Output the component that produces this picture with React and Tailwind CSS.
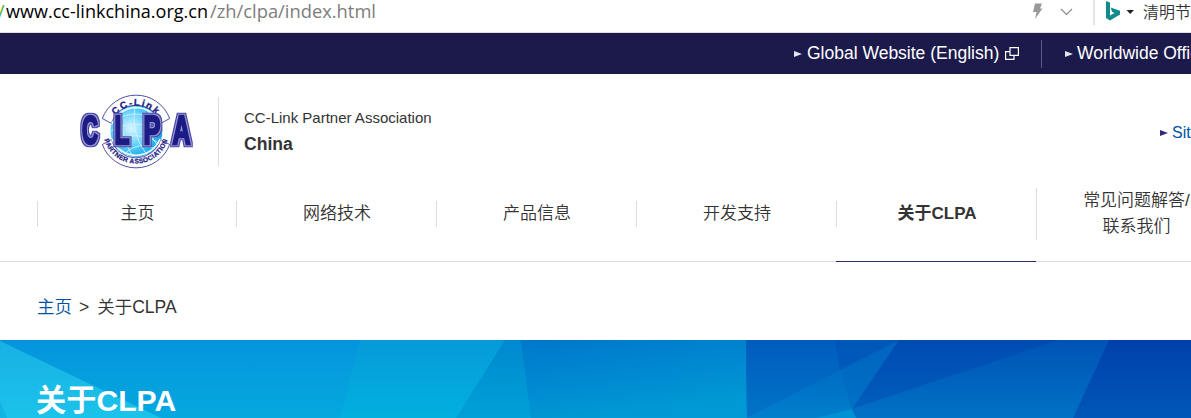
const nav = [
  { label: "主页" },
  { label: "网络技术" },
  { label: "产品信息" },
  { label: "开发支持" },
  { label: "关于CLPA", active: true },
];

function Arrow({ fill, className }) {
  return (
    <svg width="8" height="6" viewBox="0 0 8 6" className={className}>
      <path d="M0 0L8 3L0 6Z" fill={fill} />
    </svg>
  );
}

function Logo() {
  return (
    <svg width="118" height="80" viewBox="78 90 118 80" className="shrink-0">
      <defs>
        <radialGradient id="globe" cx="0.4" cy="0.45" r="0.62">
          <stop offset="0" stopColor="#d9f5ff" />
          <stop offset="0.55" stopColor="#5fd0fa" />
          <stop offset="1" stopColor="#0a9fe8" />
        </radialGradient>
        <filter id="outline" x="-10%" y="-20%" width="120%" height="140%" colorInterpolationFilters="sRGB">
          <feMorphology in="SourceAlpha" operator="dilate" radius="2" result="wide" />
          <feFlood floodColor="#4a48a6" />
          <feComposite in2="wide" operator="in" result="outer" />
          <feMorphology in="SourceAlpha" operator="dilate" radius="1" result="narrow" />
          <feFlood floodColor="#9a98d4" />
          <feComposite in2="narrow" operator="in" result="inner" />
          <feMerge>
            <feMergeNode in="outer" />
            <feMergeNode in="inner" />
            <feMergeNode in="SourceGraphic" />
          </feMerge>
        </filter>
        <path id="arcTop" d="M109.200 132.500A26.800 26.800 0 0 1 162.800 132.500" />
        <path id="arcBottom" d="M103 130.500A33 33 0 0 0 169 130.500" />
      </defs>
      <circle cx="136.500" cy="131" r="26" fill="url(#globe)" />
      <g fill="none" stroke="#d5f4ff" strokeWidth="0.8">
        <path d="M113 121Q137 106 160 123M111 131Q137 116 163 133M113 143Q138 128 160 144M122 110Q119 135 133 157M135 106Q130 133 147 155M149 109Q144 130 158 146M124 154Q139 140 156 149" />
      </g>
      <g fill="#fff" stroke="#3c3a9c" strokeWidth="0.9">
        <path d="M102.300 118.500A36 36 0 0 1 169.700 118.500L160.500 123.500A25.500 25.500 0 0 0 111.500 123.500Z" />
        <path d="M102.300 144.500A36 36 0 0 0 169.700 144.500L160.500 139.500A25.500 25.500 0 0 1 111.500 139.500Z" />
      </g>
      <path d="M112 124A25.800 25.800 0 0 1 160 124M112 139A25.800 25.800 0 0 0 160 139" fill="none" stroke="#e8f9ff" strokeWidth="1.8" />
      <g fill="#1d1b84" fontFamily="Liberation Sans Narrow, Liberation Sans, Arial, sans-serif" fontWeight="700">
        <text fontSize="9.500" letterSpacing="1.500" textAnchor="middle" stroke="#1d1b84" strokeWidth="0.3"><textPath href="#arcTop" startOffset="50%">CC-Link</textPath></text>
        <text fontSize="6.600" letterSpacing="0.35" textAnchor="middle" stroke="#1d1b84" strokeWidth="0.25"><textPath href="#arcBottom" startOffset="50%">PARTNER ASSOCIATION</textPath></text>
        <g fontSize="40" stroke="#1d1b84" strokeWidth="2.600" filter="url(#outline)">
          <text x="82" y="144.200" textLength="16" lengthAdjust="spacingAndGlyphs">C</text>
          <text x="114.500" y="144.200" textLength="15" lengthAdjust="spacingAndGlyphs">L</text>
          <text x="143.500" y="144.200" textLength="17" lengthAdjust="spacingAndGlyphs">P</text>
          <text x="172.500" y="144.200" textLength="18" lengthAdjust="spacingAndGlyphs">A</text>
        </g>
      </g>
    </svg>
  );
}

function BannerArt() {
  return (
    <svg width="1191" height="78" viewBox="0 340 1191 78" preserveAspectRatio="none" className="col-start-1 row-start-1">
      <defs>
        <linearGradient id="g1" x2="0" y2="1"><stop stopColor="#0594dc" /><stop offset="1" stopColor="#04a9df" /></linearGradient>
        <linearGradient id="g2" x2="0" y2="1"><stop stopColor="#18b1e4" /><stop offset="1" stopColor="#1bc3ea" /></linearGradient>
        <linearGradient id="g3" x2="0" y2="1"><stop stopColor="#069ad9" /><stop offset="1" stopColor="#02b0df" /></linearGradient>
        <linearGradient id="g4" x2="0" y2="1"><stop stopColor="#0088cf" /><stop offset="1" stopColor="#00a1d8" /></linearGradient>
        <linearGradient id="g5" x2="0.35" y2="1"><stop stopColor="#0077cb" /><stop offset="1" stopColor="#0099d5" /></linearGradient>
        <linearGradient id="g6" x2="0" y2="1"><stop stopColor="#005cbe" /><stop offset="1" stopColor="#0074c6" /></linearGradient>
        <linearGradient id="g7" x2="0" y2="1"><stop stopColor="#0061c0" /><stop offset="1" stopColor="#007fcb" /></linearGradient>
        <linearGradient id="g8" x2="0" y2="1"><stop stopColor="#004bb2" /><stop offset="1" stopColor="#005dbb" /></linearGradient>
        <linearGradient id="g9" x2="0" y2="1"><stop stopColor="#0053b5" /><stop offset="1" stopColor="#0071c4" /></linearGradient>
        <linearGradient id="g10" x2="0" y2="1"><stop stopColor="#0040ac" /><stop offset="1" stopColor="#0057b7" /></linearGradient>
      </defs>
      <path d="M0 340H361L341 418H0Z" fill="url(#g1)" />
      <path d="M0 341L161 418H0Z" fill="url(#g2)" />
      <path d="M0 401L7 418H0Z" fill="#12b4e3" />
      <path d="M360 340H506L457 418H340Z" fill="url(#g3)" />
      <path d="M505 340H523L533 418H456Z" fill="url(#g4)" />
      <path d="M521 340H748V418H531Z" fill="url(#g5)" />
      <path d="M746 340H1115V418H747Z" fill="url(#g9)" />
      <path d="M746 340H899V418H747Z" fill="url(#g6)" />
      <path d="M899 340L852 409L856 418H747Z" fill="url(#g7)" />
      <path d="M835 340H899L840 369.800Z" fill="#0053b5" fillOpacity="0.6" />
      <path d="M899 340L852 409L840.500 370Z" fill="#0066bf" fillOpacity="0.5" />
      <path d="M899 340H1060L852 409Z" fill="url(#g8)" />
      <path d="M1058 340H1112L1076 418H856L852 409Z" fill="url(#g9)" />
      <path d="M852 409L816 418H856Z" fill="#0090d4" />
      <path d="M1109 340H1191V418H1073Z" fill="url(#g10)" />
    </svg>
  );
}

export default function App() {
  return (
    <div className="flex h-[418px] w-[1191px] flex-col overflow-hidden bg-white font-['Liberation_Sans','Noto_Sans_CJK_SC',sans-serif] text-[17px] text-[#333]">
      <div className="flex h-[33px] shrink-0 items-start justify-between border-b border-[#dfdfdf]">
        <div className="whitespace-pre pt-px font-['Open_Sans','Noto_Sans',sans-serif] text-[18px] leading-[23px] text-black">
          <svg width="376" height="27" className="block overflow-visible">
            <text x="-2" y="17" fill="#4caf22">/</text>
            <text x="6" y="17" textLength="202" lengthAdjust="spacingAndGlyphs">www.cc-linkchina.org.cn</text>
            <text x="210" y="17" textLength="166" lengthAdjust="spacingAndGlyphs" fill="#7d7d7d">/zh/clpa/index.html</text>
          </svg>
        </div>
        <div className="flex h-[25px] w-[159px] shrink-0 items-center">
          <svg width="110" height="25" viewBox="1032 0 110 25" className="shrink-0">
            <path d="M1035 3.500H1042L1040 8.500H1042.500L1035 19L1036.500 12H1033Z" fill="#999" />
            <path d="M1061 9L1066.500 14.500L1072 9" fill="none" stroke="#888" strokeWidth="1.1" />
            <path d="M1094 0V25" stroke="#e4e4e4" strokeWidth="2" />
            <path d="M1106 1L1110 2.500V15.500L1114.500 13L1112 11.800L1110.700 7.500L1120 10.700V14.500L1110 20.500L1106 18Z" fill="#118b8b" />
            <path d="M1126.500 10H1134L1130.200 14Z" fill="#222" />
          </svg>
          <span className="w-[49px] shrink-0 overflow-hidden whitespace-nowrap pl-px text-[16px] leading-6 font-[350]">清明节</span>
        </div>
      </div>

      <div className="flex h-[41px] shrink-0 items-center whitespace-nowrap bg-[#1b1a4b] pl-[794px] text-[17.5px] text-white">
        <Arrow fill="#e6e6ee" className="shrink-0" />
        <span className="ml-[5px] w-[193px] shrink-0">Global Website (English)</span>
        <svg width="14" height="13" viewBox="0 0 14 13" className="ml-[5px] shrink-0" fill="none" stroke="#fff" strokeWidth="1.2">
          <path d="M5 0.600H13.400V8.400H5ZM5 4.600H0.600V12.400H9V8.400" />
        </svg>
        <div className="ml-[22px] h-7 w-px shrink-0 bg-[#5b5a82]" />
        <Arrow fill="#e6e6ee" className="ml-[23px] shrink-0" />
        <span className="ml-[4px] shrink-0">Worldwide Offices</span>
      </div>

      <div className="flex h-[114px] shrink-0 items-start">
        <div className="flex flex-1 items-start pl-[78px] pt-[16px]">
          <Logo />
          <div className="ml-[22px] mt-[7px] h-[69px] w-px bg-[#dcdcdc]" />
          <div className="ml-[25px] pt-[16px]">
            <div className="whitespace-nowrap text-[15px] leading-[24px]">CC-Link Partner Association</div>
            <div className="text-[17.6px] font-bold leading-[28px]">China</div>
          </div>
        </div>
        <div className="mt-[46px] flex w-[31px] shrink-0 items-center overflow-hidden whitespace-nowrap text-[16px] leading-6 text-[#0052a4]">
          <Arrow fill="#2b2c7c" className="shrink-0" />
          <span className="ml-[4px] pt-px">Sitemap</span>
        </div>
      </div>

      <div className="flex h-[74px] shrink-0 border-b border-[#dcdcdc] pl-[37px]">
        {nav.map((n, i) => (
          <div
            key={n.label}
            className={`flex h-[74px] shrink-0 items-start pt-[13px] ${i === 0 ? "w-[199px]" : "w-[200px]"} ${n.active ? "border-b border-[#2b2c6c] font-bold" : "font-[350]"}`}
          >
            <div className="h-[26px] flex-1 border-l border-[#dcdcdc] pl-px text-center leading-[26px]">{n.label}</div>
          </div>
        ))}
        <div className="h-[52px] w-[200px] shrink-0 border-l border-[#dcdcdc] text-center leading-[26px] font-[350]">
          常见问题解答/<br />联系我们
        </div>
      </div>

      <div className="flex h-[78px] shrink-0 items-center whitespace-pre pl-[37px] pt-[13px] text-[17.5px] font-[350]">
        <span className="text-[#0052a4]">主页</span>
        <span className="ml-[7px]">&gt;</span>
        <span className="ml-[8px]">关于CLPA</span>
      </div>

      <div className="grid h-[78px] shrink-0 overflow-hidden">
        <BannerArt />
        <h1 className="z-10 col-start-1 row-start-1 pl-[36px] pt-[38px] text-[30.2px] font-bold leading-[46px] text-white">关于CLPA</h1>
      </div>
    </div>
  );
}
